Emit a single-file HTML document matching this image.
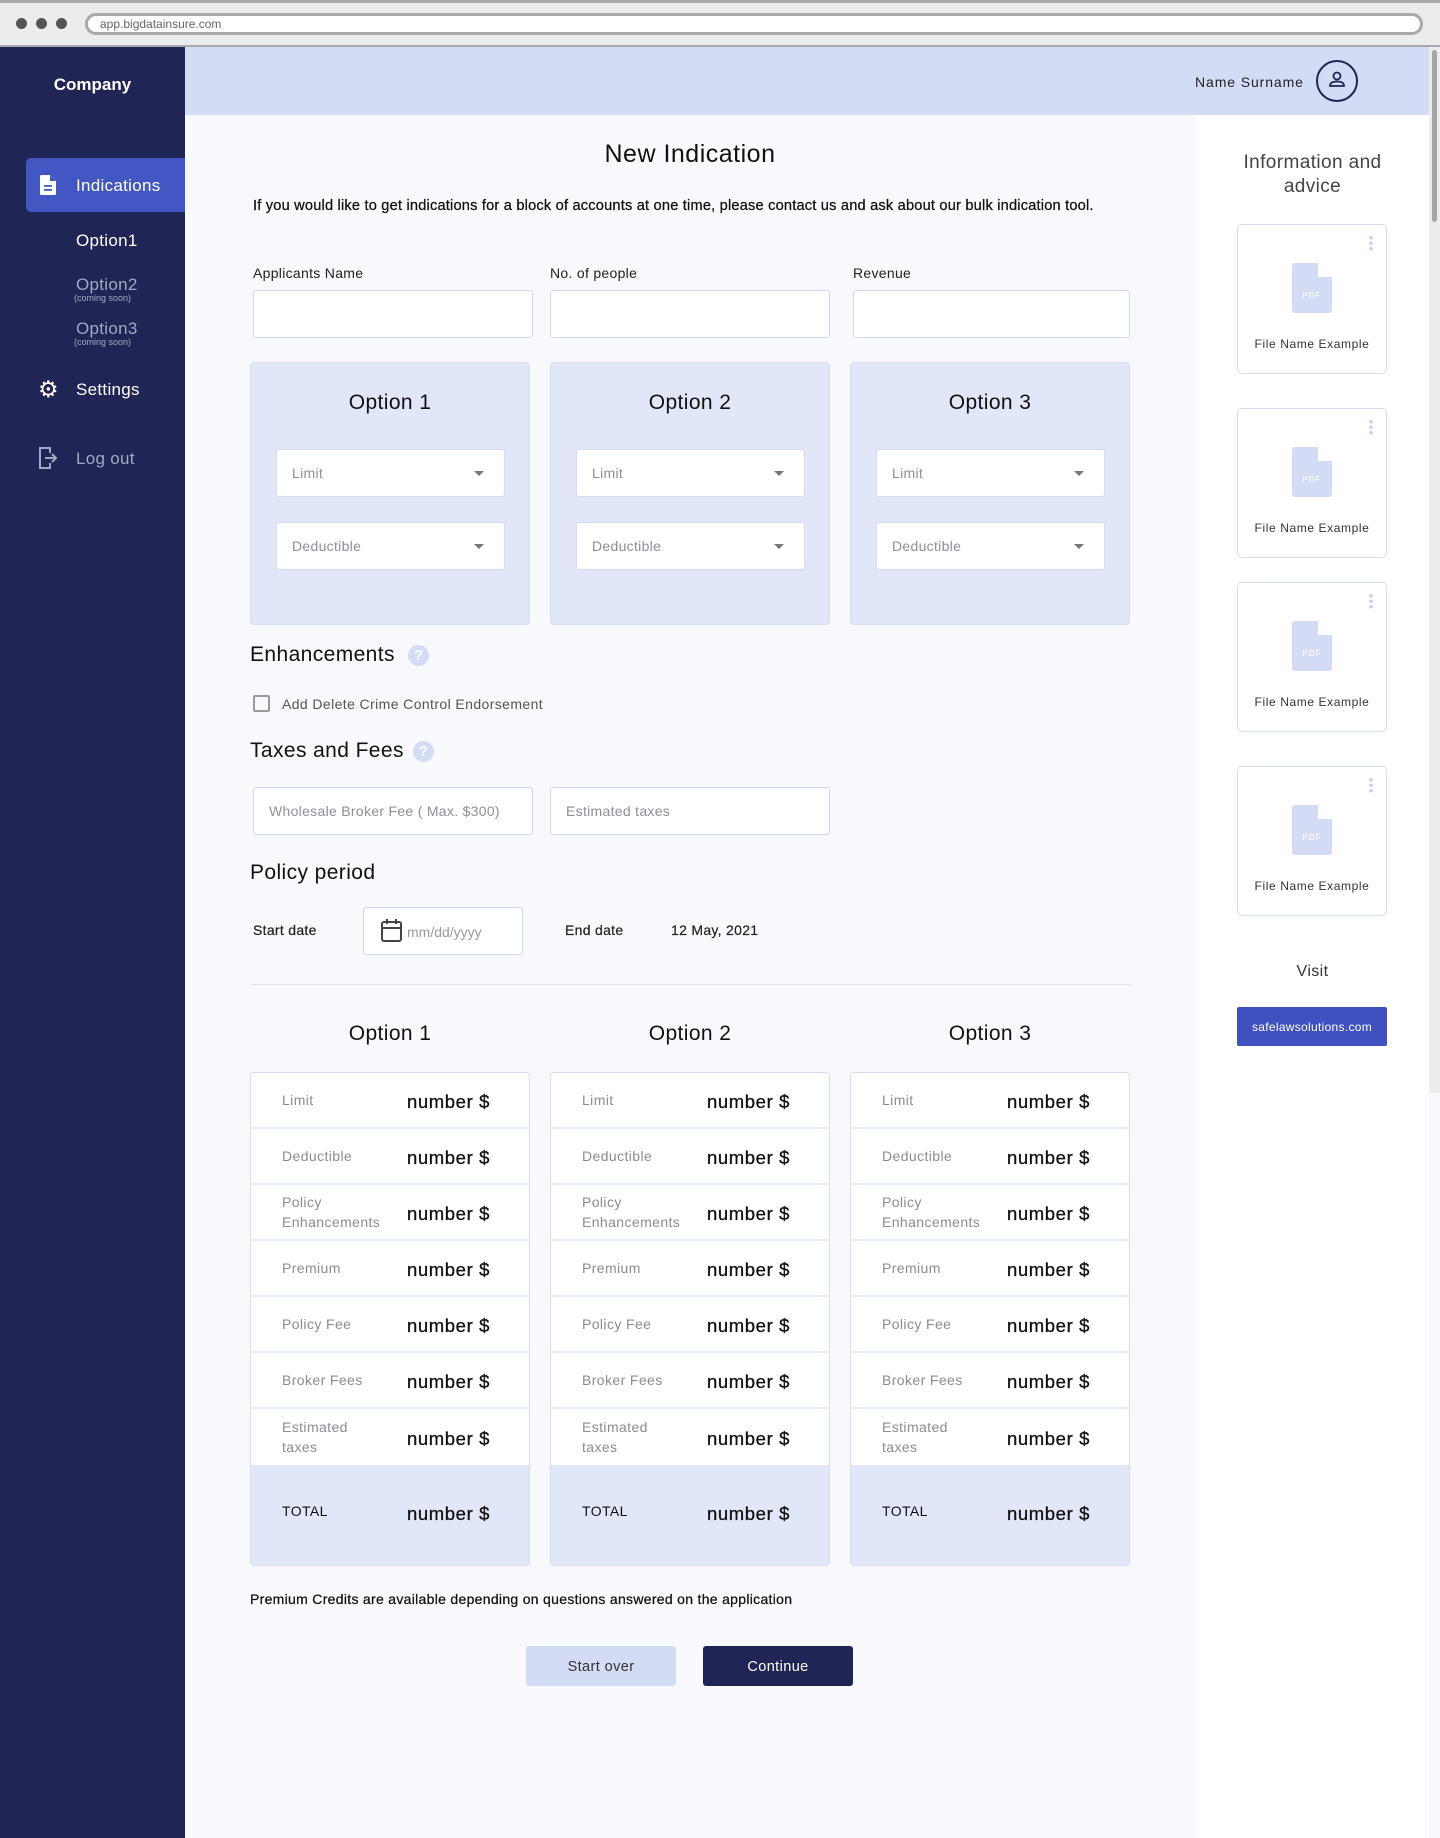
<!DOCTYPE html>
<html><head><meta charset="utf-8"><style>
*{box-sizing:border-box;margin:0;padding:0}
body{width:1440px;height:1838px;position:relative;overflow:hidden;background:#f8f9fc;font-family:"Liberation Sans",sans-serif;color:#111}
.a{position:absolute}
.chrome{left:0;top:0;width:1440px;height:47px;background:#ececec;border-bottom:2px solid #a9a9a9;border-top:3px solid #a9a9a9}
.dot{width:11px;height:11px;border-radius:50%;background:#555;top:18px}
.url{left:85px;top:13px;width:1338px;height:22px;border:3px solid #a9a9a9;border-radius:12px;background:#fff;font-size:12px;color:#666;padding-left:12px;line-height:16px}
.side{left:0;top:47px;width:185px;height:1791px;background:#1f2656}
.hdr{left:185px;top:47px;width:1244px;height:68px;background:#d3dcf5}
.rp{left:1196px;top:115px;width:233px;height:1723px;background:#fff}
.nav{color:#fff;font-size:17px;letter-spacing:.3px}
.lbl{font-size:14px;color:#222;letter-spacing:.3px}
.inp{background:#fff;border:1px solid #cfd8f3;border-radius:3px;height:48px}
.ph{font-size:14px;color:#8a8f9c;padding-left:15px;line-height:46px;letter-spacing:.3px}
.card{background:#e1e6f8;border-radius:4px;border:1px solid #d6ddf5;width:280px;height:263px;top:362px}
.card h3{font-weight:normal;font-size:21px;text-align:center;margin-top:28px;letter-spacing:.4px}
.sel{position:absolute;left:25px;width:229px;height:48px;background:#fff;border:1px solid #d3daf2;border-radius:3px;font-size:14px;color:#8a8f9c;padding-left:15px;line-height:46px;letter-spacing:.3px}
.sel:after{content:"";position:absolute;right:20px;top:21px;border:5px solid transparent;border-top:5px solid #777}
.h2{font-size:21px;color:#111;letter-spacing:.4px}
.q{width:21px;height:21px;border-radius:50%;background:#d3dcf5;color:#fff;font-size:15px;text-align:center;line-height:21px;font-weight:bold}
.tbl{top:1072px;width:280px;height:494px;border:1px solid #d6ddf5;border-radius:4px;background:#fff;overflow:hidden}
.row{position:relative;height:56px;border-bottom:2px solid #e6ebfa}
.row .l{position:absolute;left:31px;top:50%;transform:translateY(-50%);font-size:14px;color:#888c98;line-height:20px;letter-spacing:.4px}
.row .v{position:absolute;left:156px;top:50%;transform:translateY(-40%);font-size:18.5px;color:#111;letter-spacing:.6px;-webkit-text-stroke:.3px #111}
.tot{height:102px;background:#e1e6f8;position:relative}
.tot .l{position:absolute;left:31px;top:38px;font-size:14px;color:#111;letter-spacing:.4px}
.tot .v{position:absolute;left:156px;top:38px;font-size:18.5px;letter-spacing:.6px;-webkit-text-stroke:.3px #111}
.ot{font-size:21px;text-align:center;width:280px;top:1022px;letter-spacing:.4px}
.fc{left:1237px;width:150px;height:150px;background:#fff;border:1px solid #d6ddf5;border-radius:5px}
.fc svg.pdf{position:absolute;left:54px;top:38px}
.fc .nm{position:absolute;top:112px;width:100%;text-align:center;font-size:12px;color:#333;letter-spacing:.6px}
.fc .dots{position:absolute;right:13px;top:10px;width:4px;height:16px;background:radial-gradient(circle,#c9d2f0 1.8px,transparent 2px) 0 0/4px 5.5px}
</style></head><body>
<div class="a chrome"></div>
<div class="a dot" style="left:16px"></div><div class="a dot" style="left:36px"></div><div class="a dot" style="left:56px"></div>
<div class="a url">app.bigdatainsure.com</div>
<div class="a" style="left:1429px;top:47px;width:11px;height:1046px;background:#ececec"></div>
<div class="a" style="left:1432px;top:50px;width:5px;height:172px;background:#a5a5a5;border-radius:3px"></div>

<div class="a side"></div>
<div class="a" style="left:0;top:75px;width:185px;text-align:center;color:#fff;font-weight:bold;font-size:17px">Company</div>
<div class="a" style="left:26px;top:158px;width:159px;height:54px;background:#4257c3;border-radius:5px 0 0 5px"></div>
<svg class="a" style="left:40px;top:175px" width="16" height="20" viewBox="0 0 16 20"><path d="M0 1.5Q0 0 1.5 0H10L16 6V18.5Q16 20 14.5 20H1.5Q0 20 0 18.5Z" fill="#fff"/><path d="M10 0V6H16" fill="#4257c3"/><rect x="4" y="10" width="8" height="1.8" fill="#4257c3"/><rect x="4" y="14" width="8" height="1.8" fill="#4257c3"/></svg>
<div class="a nav" style="left:76px;top:176px">Indications</div>
<div class="a nav" style="left:76px;top:231px">Option1</div>
<div class="a nav" style="left:76px;top:275px;color:#a3a8c0">Option2</div>
<div class="a" style="left:74px;top:293px;font-size:9px;color:#a3a8c0">(coming soon)</div>
<div class="a nav" style="left:76px;top:319px;color:#a3a8c0">Option3</div>
<div class="a" style="left:74px;top:337px;font-size:9px;color:#a3a8c0">(coming soon)</div>
<div class="a" style="left:38px;top:377px;color:#fff;font-size:23px;line-height:24px">&#9881;</div>
<div class="a nav" style="left:76px;top:380px">Settings</div>
<svg class="a" style="left:39px;top:447px" width="19" height="22" viewBox="0 0 19 22" fill="none" stroke="#a3a8c0" stroke-width="2"><path d="M11 6V1H1V21H11V16"/><path d="M6 11H17M13 7L17 11L13 15"/></svg>
<div class="a nav" style="left:76px;top:449px;color:#a3a8c0">Log out</div>

<div class="a hdr"></div>
<div class="a" style="left:1195px;top:74px;font-size:14px;color:#222;letter-spacing:.9px">Name Surname</div>
<div class="a" style="left:1316px;top:60px;width:42px;height:42px;border:2px solid #1f2656;border-radius:50%"></div>
<svg class="a" style="left:1327px;top:70px" width="20" height="20" viewBox="0 0 20 20" fill="none" stroke="#1f2656" stroke-width="1.8"><circle cx="10" cy="6" r="3.5"/><path d="M3 16Q3 11.5 10 11.5Q17 11.5 17 16Z"/></svg>

<div class="a" style="left:250px;top:140px;width:880px;text-align:center;font-size:25px;letter-spacing:.5px">New Indication</div>
<div class="a" style="left:253px;top:198px;font-size:14.6px;color:#111;letter-spacing:.2px;-webkit-text-stroke:.25px #111">If you would like to get indications for a block of accounts at one time, please contact us and ask about our bulk indication tool.</div>

<div class="a lbl" style="left:253px;top:265px">Applicants Name</div>
<div class="a lbl" style="left:550px;top:265px">No. of people</div>
<div class="a lbl" style="left:853px;top:265px">Revenue</div>
<div class="a inp" style="left:253px;top:290px;width:280px"></div>
<div class="a inp" style="left:550px;top:290px;width:280px"></div>
<div class="a inp" style="left:853px;top:290px;width:277px"></div>

<div class="a card" style="left:250px"><h3>Option 1</h3><div class="sel" style="top:86px">Limit</div><div class="sel" style="top:159px">Deductible</div></div>
<div class="a card" style="left:550px"><h3>Option 2</h3><div class="sel" style="top:86px">Limit</div><div class="sel" style="top:159px">Deductible</div></div>
<div class="a card" style="left:850px"><h3>Option 3</h3><div class="sel" style="top:86px">Limit</div><div class="sel" style="top:159px">Deductible</div></div>

<div class="a h2" style="left:250px;top:643px">Enhancements</div>
<div class="a q" style="left:408px;top:645px">?</div>
<div class="a" style="left:253px;top:695px;width:17px;height:17px;border:2px solid #999;border-radius:2px"></div>
<div class="a" style="left:282px;top:696px;font-size:14px;color:#555;letter-spacing:.4px">Add Delete Crime Control Endorsement</div>
<div class="a h2" style="left:250px;top:739px">Taxes and Fees</div>
<div class="a q" style="left:413px;top:741px">?</div>
<div class="a inp ph" style="left:253px;top:787px;width:280px">Wholesale Broker Fee ( Max. $300)</div>
<div class="a inp ph" style="left:550px;top:787px;width:280px">Estimated taxes</div>
<div class="a h2" style="left:250px;top:861px">Policy period</div>
<div class="a" style="left:253px;top:922px;font-size:14px;color:#222;letter-spacing:.3px;-webkit-text-stroke:.2px #222">Start date</div>
<div class="a inp" style="left:363px;top:907px;width:160px"></div>
<svg class="a" style="left:381px;top:919px" width="21" height="23" viewBox="0 0 21 23" fill="none" stroke="#444" stroke-width="2"><rect x="1" y="3" width="19" height="19" rx="2"/><path d="M1 9H20M6 0V5M15 0V5"/></svg>
<div class="a" style="left:407px;top:924px;font-size:14px;color:#999">mm/dd/yyyy</div>
<div class="a" style="left:565px;top:922px;font-size:14px;color:#222;letter-spacing:.3px;-webkit-text-stroke:.2px #222">End date</div>
<div class="a" style="left:671px;top:922px;font-size:14px;color:#222;letter-spacing:.3px;-webkit-text-stroke:.2px #222">12 May, 2021</div>
<div class="a" style="left:250px;top:984px;width:880px;height:1px;background:#dde3f5"></div>

<div class="a ot" style="left:250px">Option 1</div>
<div class="a ot" style="left:550px">Option 2</div>
<div class="a ot" style="left:850px">Option 3</div>

<div class="a tbl" style="left:250px">
<div class="row"><span class="l">Limit</span><span class="v">number $</span></div>
<div class="row"><span class="l">Deductible</span><span class="v">number $</span></div>
<div class="row"><span class="l">Policy<br>Enhancements</span><span class="v">number $</span></div>
<div class="row"><span class="l">Premium</span><span class="v">number $</span></div>
<div class="row"><span class="l">Policy Fee</span><span class="v">number $</span></div>
<div class="row"><span class="l">Broker Fees</span><span class="v">number $</span></div>
<div class="row" style="border:0"><span class="l">Estimated<br>taxes</span><span class="v">number $</span></div>
<div class="tot"><span class="l">TOTAL</span><span class="v">number $</span></div>
</div>
<div class="a tbl" style="left:550px">
<div class="row"><span class="l">Limit</span><span class="v">number $</span></div>
<div class="row"><span class="l">Deductible</span><span class="v">number $</span></div>
<div class="row"><span class="l">Policy<br>Enhancements</span><span class="v">number $</span></div>
<div class="row"><span class="l">Premium</span><span class="v">number $</span></div>
<div class="row"><span class="l">Policy Fee</span><span class="v">number $</span></div>
<div class="row"><span class="l">Broker Fees</span><span class="v">number $</span></div>
<div class="row" style="border:0"><span class="l">Estimated<br>taxes</span><span class="v">number $</span></div>
<div class="tot"><span class="l">TOTAL</span><span class="v">number $</span></div>
</div>
<div class="a tbl" style="left:850px">
<div class="row"><span class="l">Limit</span><span class="v">number $</span></div>
<div class="row"><span class="l">Deductible</span><span class="v">number $</span></div>
<div class="row"><span class="l">Policy<br>Enhancements</span><span class="v">number $</span></div>
<div class="row"><span class="l">Premium</span><span class="v">number $</span></div>
<div class="row"><span class="l">Policy Fee</span><span class="v">number $</span></div>
<div class="row"><span class="l">Broker Fees</span><span class="v">number $</span></div>
<div class="row" style="border:0"><span class="l">Estimated<br>taxes</span><span class="v">number $</span></div>
<div class="tot"><span class="l">TOTAL</span><span class="v">number $</span></div>
</div>

<div class="a" style="left:250px;top:1591px;font-size:14px;color:#111;letter-spacing:.3px;-webkit-text-stroke:.25px #111">Premium Credits are available depending on questions answered on the application</div>
<div class="a" style="left:526px;top:1646px;width:150px;height:40px;background:#d3dcf5;border-radius:3px;text-align:center;line-height:42px;font-size:14.5px;color:#333;letter-spacing:.4px">Start over</div>
<div class="a" style="left:703px;top:1646px;width:150px;height:40px;background:#1f2656;border-radius:3px;text-align:center;line-height:42px;font-size:14.5px;color:#fff;letter-spacing:.4px">Continue</div>

<div class="a rp"></div>
<div class="a" style="left:1196px;top:151px;width:233px;text-align:center;font-size:19px;color:#444;line-height:24px;letter-spacing:.4px">Information and<br>advice</div>
<div class="a fc" style="top:224px"><div class="dots"></div><svg class="pdf" width="40" height="50" viewBox="0 0 40 50"><path d="M3 0H26L40 14V47Q40 50 37 50H3Q0 50 0 47V3Q0 0 3 0Z" fill="#d3dcf5"/><path d="M26 0V14H40Z" fill="#fff"/><text x="20" y="35" font-size="8" fill="#fff" text-anchor="middle" font-family="Liberation Sans" letter-spacing="1">PDF</text></svg><div class="nm">File Name Example</div></div>
<div class="a fc" style="top:408px"><div class="dots"></div><svg class="pdf" width="40" height="50" viewBox="0 0 40 50"><path d="M3 0H26L40 14V47Q40 50 37 50H3Q0 50 0 47V3Q0 0 3 0Z" fill="#d3dcf5"/><path d="M26 0V14H40Z" fill="#fff"/><text x="20" y="35" font-size="8" fill="#fff" text-anchor="middle" font-family="Liberation Sans" letter-spacing="1">PDF</text></svg><div class="nm">File Name Example</div></div>
<div class="a fc" style="top:582px"><div class="dots"></div><svg class="pdf" width="40" height="50" viewBox="0 0 40 50"><path d="M3 0H26L40 14V47Q40 50 37 50H3Q0 50 0 47V3Q0 0 3 0Z" fill="#d3dcf5"/><path d="M26 0V14H40Z" fill="#fff"/><text x="20" y="35" font-size="8" fill="#fff" text-anchor="middle" font-family="Liberation Sans" letter-spacing="1">PDF</text></svg><div class="nm">File Name Example</div></div>
<div class="a fc" style="top:766px"><div class="dots"></div><svg class="pdf" width="40" height="50" viewBox="0 0 40 50"><path d="M3 0H26L40 14V47Q40 50 37 50H3Q0 50 0 47V3Q0 0 3 0Z" fill="#d3dcf5"/><path d="M26 0V14H40Z" fill="#fff"/><text x="20" y="35" font-size="8" fill="#fff" text-anchor="middle" font-family="Liberation Sans" letter-spacing="1">PDF</text></svg><div class="nm">File Name Example</div></div>
<div class="a" style="left:1196px;top:963px;width:233px;text-align:center;font-size:16px;color:#333;letter-spacing:.4px">Visit</div>
<div class="a" style="left:1237px;top:1007px;width:150px;height:39px;background:#3f51c0;border-radius:2px;color:#fff;font-size:12px;text-align:center;line-height:40px;letter-spacing:.3px">safelawsolutions.com</div>
</body></html>
